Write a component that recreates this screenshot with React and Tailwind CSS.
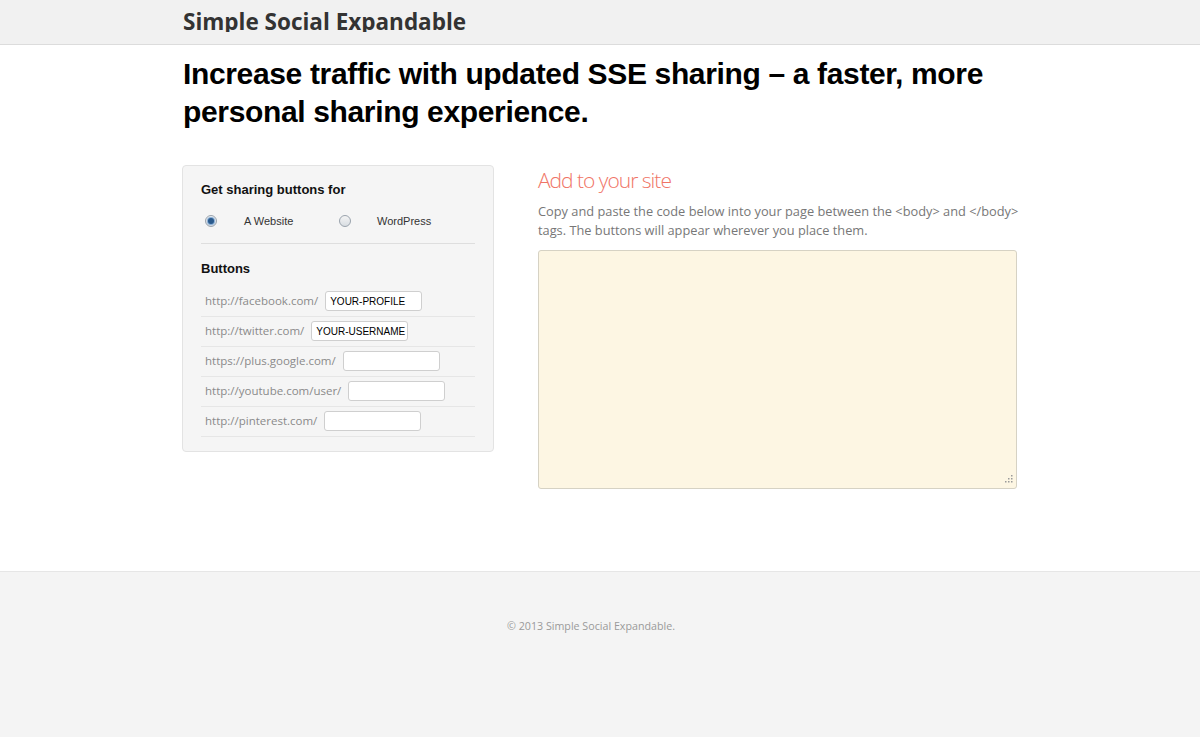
import React from "react";

const sites = [
  {label: "http://facebook.com/", value: "YOUR-PROFILE"},
  {label: "http://twitter.com/", value: "YOUR-USERNAME"},
  {label: "https://plus.google.com/", value: ""},
  {label: "http://youtube.com/user/", value: ""},
  {label: "http://pinterest.com/", value: ""},
]

const Radio = ({checked}) => (
  <span className="inline-flex h-[12px] w-[12px] shrink-0 items-center justify-center rounded-full border border-[#9aa3ad] bg-gradient-to-b from-[#f4f4f4] to-[#d8dde2]">
    {checked && <span className="h-[6px] w-[6px] rounded-full bg-[#2a5a8c] shadow-[0_0_1px_1px_#7fa8d4]"/>}
  </span>
)

const SiteRow = ({label, value}) => (
  <div className="flex h-[30px] items-center border-b border-[#e6e6e6] pl-[4px]">
    <span className="font-['Open_Sans',sans-serif] text-[11.5px] text-[#8a8a8a]">{label}</span>
    <input type="text"
           readOnly
           value={value}
           className="ml-[7px] h-[20px] w-[97px] rounded-[3px] border border-[#cfcfcf] bg-white pl-[4px] pr-0 font-['Liberation_Sans',Arial,sans-serif] text-[10px] text-black outline-none"/>
  </div>
)

// dotted grip in the textarea corner
const Grip = () => (
  <svg width="10" height="10" viewBox="0 0 10 10" className="absolute right-[4px] bottom-[4px]">
    <g fill="#9a9a9a">
      <rect x="8" y="0" width="1.5" height="1.5"/>
      <rect x="5" y="3" width="1.5" height="1.5"/>
      <rect x="8" y="3" width="1.5" height="1.5"/>
      <rect x="2" y="6" width="1.5" height="1.5"/>
      <rect x="5" y="6" width="1.5" height="1.5"/>
      <rect x="8" y="6" width="1.5" height="1.5"/>
    </g>
  </svg>
)

const App = () => (
  <div className="flex min-h-[737px] flex-col bg-white font-['Liberation_Sans',Arial,sans-serif]">

    {/* Top bar */}
    <header className="h-[45px] border-b border-[#dcdcdc] bg-[#f1f1f1]">
      <div className="mx-auto h-[32px] w-[834px] overflow-hidden pt-[7px]">
        <div className="font-['Open_Sans',sans-serif] text-[22.5px] font-bold leading-[30px] text-[#333]">
          Simple Social Expandable
        </div>
      </div>
    </header>

    <main className="mx-auto w-[834px] flex-1 pb-[82px]">
      <h1 className="mt-[10px] text-[30px] font-bold leading-[38px] tracking-[-0.35px] text-black">
        Increase traffic with updated SSE sharing – a faster, more personal sharing experience.
      </h1>

      <div className="mt-[34px] flex gap-[44px]">

        {/* Options panel */}
        <div className="ml-[-1px] w-[312px] self-start rounded-[4px] border border-[#e3e3e3] bg-[#f5f5f5] px-[18px] pt-[14px] pb-[14px]">
          <h3 className="text-[13px] font-bold text-[#111]">Get sharing buttons for</h3>
          <div className="mt-[13px] flex items-center border-b border-[#dedede] pb-[14px] pl-[4px] text-[11px] text-[#333]">
            <Radio checked/>
            <span className="ml-[27px] w-[95px]">A Website</span>
            <Radio/>
            <span className="ml-[26px]">WordPress</span>
          </div>

          <h3 className="mt-[15px] text-[13px] font-bold text-[#111]">Buttons</h3>
          <div className="mt-[8px]">
            {sites.map(({label, value}) => (
              <SiteRow key={label} label={label} value={value}/>
            ))}
          </div>
        </div>

        {/* Embed code */}
        <div className="w-[479px] pt-[2px]">
          <h2 className="font-['Open_Sans',sans-serif] text-[21px] font-light leading-[26px] tracking-[-1px] text-[#f07466]">
            Add to your site
          </h2>
          <p className="mt-[9px] w-[492px] font-['Open_Sans',sans-serif] text-[12.8px] leading-[19px] text-[#777]">
            Copy and paste the code below into your page between the &lt;body&gt; and &lt;/body&gt; tags. The buttons will appear wherever you place them.
          </p>
          <div className="relative mt-[10px]">
            <textarea readOnly
                      className="block h-[239px] w-[479px] resize-none rounded-[3px] border border-[#d6d2c4] bg-[#fdf6e3] outline-none"/>
            <Grip/>
          </div>
        </div>
      </div>
    </main>

    <footer className="h-[166px] border-t border-[#e6e6e6] bg-[#f4f4f4] pt-[46px] pr-[18px] text-center font-['Open_Sans',sans-serif] text-[10.7px] text-[#9a9a9a]">
      © 2013 Simple Social Expandable.
    </footer>
  </div>
)

export default App
